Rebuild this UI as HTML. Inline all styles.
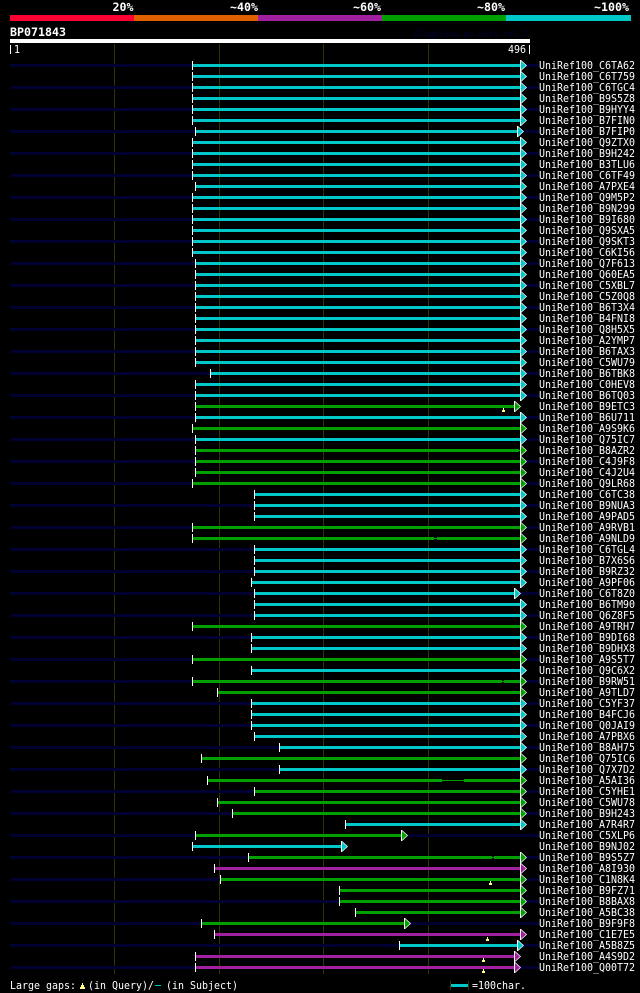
<!DOCTYPE html>
<html><head><meta charset="utf-8"><title>BP071843</title>
<style>
html,body{margin:0;padding:0;background:#000;width:640px;height:993px;overflow:hidden}
svg{display:block;position:absolute;left:0;top:0}
text{fill:#fff;font-family:"DejaVu Sans Mono","Liberation Mono",monospace;font-size:11px}
.b{font-weight:bold;font-size:11.5px}
.c{fill:#00c8c8}.g{fill:#00a000}.p{fill:#a020a0}
#bg{stroke:#000033;stroke-width:3;fill:none}
</style></head><body>
<svg width="640" height="993" viewBox="0 0 640 993" xmlns="http://www.w3.org/2000/svg">
<defs>
<g id="a"><path fill="#fff" d="M0-4H1L7 1.5 1 7H0Z"/><path d="M1-3L6 1.5 1 6Z"/></g>
<rect id="t" y="-3" width="1" height="9" fill="#fff"/>
<path id="y" fill="#ffff88" d="M1 0h1v2h1v2H0V2h1z"/>
</defs>
<rect width="640" height="993" fill="#000"/>
<text class="b" x="112.5" y="11" textLength="21" lengthAdjust="spacingAndGlyphs">20%</text>
<text class="b" x="230" y="11" textLength="28" lengthAdjust="spacingAndGlyphs">~40%</text>
<text class="b" x="353" y="11" textLength="28" lengthAdjust="spacingAndGlyphs">~60%</text>
<text class="b" x="477" y="11" textLength="28" lengthAdjust="spacingAndGlyphs">~80%</text>
<text class="b" x="594" y="11" textLength="35" lengthAdjust="spacingAndGlyphs">~100%</text>
<rect x="10" y="15" width="124" height="6" fill="#ff0033"/>
<rect x="134" y="15" width="124" height="6" fill="#e06000"/>
<rect x="258" y="15" width="124" height="6" fill="#a020a0"/>
<rect x="382" y="15" width="124" height="6" fill="#00a000"/>
<rect x="506" y="15" width="125" height="6" fill="#00c8c8"/>
<text class="b" x="10" y="36" textLength="56" lengthAdjust="spacingAndGlyphs">BP071843</text>
<text x="414" y="37" style="fill:#000033;font-size:9px" textLength="114" lengthAdjust="spacingAndGlyphs">AlignView.pm Beta rel.7</text>
<rect x="10" y="39" width="520" height="4" fill="#fff"/>
<rect x="10" y="45" width="1" height="9" fill="#fff"/>
<text x="14" y="53" textLength="6" lengthAdjust="spacingAndGlyphs">1</text>
<text x="508" y="53" textLength="18" lengthAdjust="spacingAndGlyphs">496</text>
<rect x="529" y="45" width="1" height="9" fill="#fff"/>
<path d="M114.5 44V974M219.5 44V974M323.5 44V974M428.5 44V974" stroke="#333300" fill="none"/>
<path id="bg" d="M10 65.5H539M10 87.5H539M10 109.5H539M10 131.5H539M10 153.5H539M10 175.5H539M10 197.5H539M10 219.5H539M10 241.5H539M10 263.5H539M10 285.5H539M10 307.5H539M10 329.5H539M10 351.5H539M10 373.5H539M10 395.5H539M10 417.5H539M10 439.5H539M10 461.5H539M10 483.5H539M10 505.5H539M10 527.5H539M10 549.5H539M10 571.5H539M10 593.5H539M10 615.5H539M10 637.5H539M10 659.5H539M10 681.5H539M10 703.5H539M10 725.5H539M10 747.5H539M10 769.5H539M10 791.5H539M10 813.5H539M10 835.5H539M10 857.5H539M10 879.5H539M10 901.5H539M10 923.5H539M10 945.5H539M10 967.5H539"/>

<g transform="translate(0 64)" class="c"><rect x="192" width="328" height="3"/><use href="#t" x="192"/><use href="#a" x="520"/><text x="539" y="5" textLength="96" lengthAdjust="spacingAndGlyphs">UniRef100_C6TA62</text></g>
<g transform="translate(0 75)" class="c"><rect x="192" width="328" height="3"/><use href="#t" x="192"/><use href="#a" x="520"/><text x="539" y="5" textLength="96" lengthAdjust="spacingAndGlyphs">UniRef100_C6T759</text></g>
<g transform="translate(0 86)" class="c"><rect x="192" width="328" height="3"/><use href="#t" x="192"/><use href="#a" x="520"/><text x="539" y="5" textLength="96" lengthAdjust="spacingAndGlyphs">UniRef100_C6TGC4</text></g>
<g transform="translate(0 97)" class="c"><rect x="192" width="328" height="3"/><use href="#t" x="192"/><use href="#a" x="520"/><text x="539" y="5" textLength="96" lengthAdjust="spacingAndGlyphs">UniRef100_B9S5Z8</text></g>
<g transform="translate(0 108)" class="c"><rect x="192" width="328" height="3"/><use href="#t" x="192"/><use href="#a" x="520"/><text x="539" y="5" textLength="96" lengthAdjust="spacingAndGlyphs">UniRef100_B9HYY4</text></g>
<g transform="translate(0 119)" class="c"><rect x="192" width="328" height="3"/><use href="#t" x="192"/><use href="#a" x="520"/><text x="539" y="5" textLength="96" lengthAdjust="spacingAndGlyphs">UniRef100_B7FIN0</text></g>
<g transform="translate(0 130)" class="c"><rect x="195" width="322" height="3"/><use href="#t" x="195"/><use href="#a" x="517"/><text x="539" y="5" textLength="96" lengthAdjust="spacingAndGlyphs">UniRef100_B7FIP0</text></g>
<g transform="translate(0 141)" class="c"><rect x="192" width="328" height="3"/><use href="#t" x="192"/><use href="#a" x="520"/><text x="539" y="5" textLength="96" lengthAdjust="spacingAndGlyphs">UniRef100_Q9ZTX0</text></g>
<g transform="translate(0 152)" class="c"><rect x="192" width="328" height="3"/><use href="#t" x="192"/><use href="#a" x="520"/><text x="539" y="5" textLength="96" lengthAdjust="spacingAndGlyphs">UniRef100_B9H242</text></g>
<g transform="translate(0 163)" class="c"><rect x="192" width="328" height="3"/><use href="#t" x="192"/><use href="#a" x="520"/><text x="539" y="5" textLength="96" lengthAdjust="spacingAndGlyphs">UniRef100_B3TLU6</text></g>
<g transform="translate(0 174)" class="c"><rect x="192" width="328" height="3"/><use href="#t" x="192"/><use href="#a" x="520"/><text x="539" y="5" textLength="96" lengthAdjust="spacingAndGlyphs">UniRef100_C6TF49</text></g>
<g transform="translate(0 185)" class="c"><rect x="195" width="325" height="3"/><use href="#t" x="195"/><use href="#a" x="520"/><text x="539" y="5" textLength="96" lengthAdjust="spacingAndGlyphs">UniRef100_A7PXE4</text></g>
<g transform="translate(0 196)" class="c"><rect x="192" width="328" height="3"/><use href="#t" x="192"/><use href="#a" x="520"/><text x="539" y="5" textLength="96" lengthAdjust="spacingAndGlyphs">UniRef100_Q9M5P2</text></g>
<g transform="translate(0 207)" class="c"><rect x="192" width="328" height="3"/><use href="#t" x="192"/><use href="#a" x="520"/><text x="539" y="5" textLength="96" lengthAdjust="spacingAndGlyphs">UniRef100_B9N299</text></g>
<g transform="translate(0 218)" class="c"><rect x="192" width="328" height="3"/><use href="#t" x="192"/><use href="#a" x="520"/><text x="539" y="5" textLength="96" lengthAdjust="spacingAndGlyphs">UniRef100_B9I680</text></g>
<g transform="translate(0 229)" class="c"><rect x="192" width="328" height="3"/><use href="#t" x="192"/><use href="#a" x="520"/><text x="539" y="5" textLength="96" lengthAdjust="spacingAndGlyphs">UniRef100_Q9SXA5</text></g>
<g transform="translate(0 240)" class="c"><rect x="192" width="328" height="3"/><use href="#t" x="192"/><use href="#a" x="520"/><text x="539" y="5" textLength="96" lengthAdjust="spacingAndGlyphs">UniRef100_Q9SKT3</text></g>
<g transform="translate(0 251)" class="c"><rect x="192" width="328" height="3"/><use href="#t" x="192"/><use href="#a" x="520"/><text x="539" y="5" textLength="96" lengthAdjust="spacingAndGlyphs">UniRef100_C6KI56</text></g>
<g transform="translate(0 262)" class="c"><rect x="195" width="325" height="3"/><use href="#t" x="195"/><use href="#a" x="520"/><text x="539" y="5" textLength="96" lengthAdjust="spacingAndGlyphs">UniRef100_Q7F613</text></g>
<g transform="translate(0 273)" class="c"><rect x="195" width="325" height="3"/><use href="#t" x="195"/><use href="#a" x="520"/><text x="539" y="5" textLength="96" lengthAdjust="spacingAndGlyphs">UniRef100_Q60EA5</text></g>
<g transform="translate(0 284)" class="c"><rect x="195" width="325" height="3"/><use href="#t" x="195"/><use href="#a" x="520"/><text x="539" y="5" textLength="96" lengthAdjust="spacingAndGlyphs">UniRef100_C5XBL7</text></g>
<g transform="translate(0 295)" class="c"><rect x="195" width="325" height="3"/><use href="#t" x="195"/><use href="#a" x="520"/><text x="539" y="5" textLength="96" lengthAdjust="spacingAndGlyphs">UniRef100_C5Z0Q8</text></g>
<g transform="translate(0 306)" class="c"><rect x="195" width="325" height="3"/><use href="#t" x="195"/><use href="#a" x="520"/><text x="539" y="5" textLength="96" lengthAdjust="spacingAndGlyphs">UniRef100_B6T3X4</text></g>
<g transform="translate(0 317)" class="c"><rect x="195" width="325" height="3"/><use href="#t" x="195"/><use href="#a" x="520"/><text x="539" y="5" textLength="96" lengthAdjust="spacingAndGlyphs">UniRef100_B4FNI8</text></g>
<g transform="translate(0 328)" class="c"><rect x="195" width="325" height="3"/><use href="#t" x="195"/><use href="#a" x="520"/><text x="539" y="5" textLength="96" lengthAdjust="spacingAndGlyphs">UniRef100_Q8H5X5</text></g>
<g transform="translate(0 339)" class="c"><rect x="195" width="325" height="3"/><use href="#t" x="195"/><use href="#a" x="520"/><text x="539" y="5" textLength="96" lengthAdjust="spacingAndGlyphs">UniRef100_A2YMP7</text></g>
<g transform="translate(0 350)" class="c"><rect x="195" width="325" height="3"/><use href="#t" x="195"/><use href="#a" x="520"/><text x="539" y="5" textLength="96" lengthAdjust="spacingAndGlyphs">UniRef100_B6TAX3</text></g>
<g transform="translate(0 361)" class="c"><rect x="195" width="325" height="3"/><use href="#t" x="195"/><use href="#a" x="520"/><text x="539" y="5" textLength="96" lengthAdjust="spacingAndGlyphs">UniRef100_C5WU79</text></g>
<g transform="translate(0 372)" class="c"><rect x="210" width="310" height="3"/><use href="#t" x="210"/><use href="#a" x="520"/><text x="539" y="5" textLength="96" lengthAdjust="spacingAndGlyphs">UniRef100_B6TBK8</text></g>
<g transform="translate(0 383)" class="c"><rect x="195" width="325" height="3"/><use href="#t" x="195"/><use href="#a" x="520"/><text x="539" y="5" textLength="96" lengthAdjust="spacingAndGlyphs">UniRef100_C0HEV8</text></g>
<g transform="translate(0 394)" class="c"><rect x="195" width="325" height="3"/><use href="#t" x="195"/><use href="#a" x="520"/><text x="539" y="5" textLength="96" lengthAdjust="spacingAndGlyphs">UniRef100_B6TQ03</text></g>
<g transform="translate(0 405)" class="g"><rect x="195" width="319" height="3"/><use href="#t" x="195"/><use href="#a" x="514"/><text x="539" y="5" textLength="96" lengthAdjust="spacingAndGlyphs">UniRef100_B9ETC3</text></g>
<g transform="translate(0 416)" class="c"><rect x="195" width="325" height="3"/><use href="#t" x="195"/><use href="#a" x="520"/><text x="539" y="5" textLength="96" lengthAdjust="spacingAndGlyphs">UniRef100_B6U711</text></g>
<g transform="translate(0 427)" class="g"><rect x="192" width="328" height="3"/><use href="#t" x="192"/><use href="#a" x="520"/><text x="539" y="5" textLength="96" lengthAdjust="spacingAndGlyphs">UniRef100_A9S9K6</text></g>
<g transform="translate(0 438)" class="c"><rect x="195" width="325" height="3"/><use href="#t" x="195"/><use href="#a" x="520"/><text x="539" y="5" textLength="96" lengthAdjust="spacingAndGlyphs">UniRef100_Q75IC7</text></g>
<g transform="translate(0 449)" class="g"><rect x="195" width="325" height="3"/><use href="#t" x="195"/><use href="#a" x="520"/><text x="539" y="5" textLength="96" lengthAdjust="spacingAndGlyphs">UniRef100_B8AZR2</text></g>
<g transform="translate(0 460)" class="g"><rect x="195" width="325" height="3"/><use href="#t" x="195"/><use href="#a" x="520"/><text x="539" y="5" textLength="96" lengthAdjust="spacingAndGlyphs">UniRef100_C4J9F8</text></g>
<g transform="translate(0 471)" class="g"><rect x="195" width="325" height="3"/><use href="#t" x="195"/><use href="#a" x="520"/><text x="539" y="5" textLength="96" lengthAdjust="spacingAndGlyphs">UniRef100_C4J2U4</text></g>
<g transform="translate(0 482)" class="g"><rect x="192" width="328" height="3"/><use href="#t" x="192"/><use href="#a" x="520"/><text x="539" y="5" textLength="96" lengthAdjust="spacingAndGlyphs">UniRef100_Q9LR68</text></g>
<g transform="translate(0 493)" class="c"><rect x="254" width="266" height="3"/><use href="#t" x="254"/><use href="#a" x="520"/><text x="539" y="5" textLength="96" lengthAdjust="spacingAndGlyphs">UniRef100_C6TC38</text></g>
<g transform="translate(0 504)" class="c"><rect x="254" width="266" height="3"/><use href="#t" x="254"/><use href="#a" x="520"/><text x="539" y="5" textLength="96" lengthAdjust="spacingAndGlyphs">UniRef100_B9NUA3</text></g>
<g transform="translate(0 515)" class="c"><rect x="254" width="266" height="3"/><use href="#t" x="254"/><use href="#a" x="520"/><text x="539" y="5" textLength="96" lengthAdjust="spacingAndGlyphs">UniRef100_A9PAD5</text></g>
<g transform="translate(0 526)" class="g"><rect x="192" width="328" height="3"/><use href="#t" x="192"/><use href="#a" x="520"/><text x="539" y="5" textLength="96" lengthAdjust="spacingAndGlyphs">UniRef100_A9RVB1</text></g>
<g transform="translate(0 537)" class="g"><rect x="192" width="328" height="3"/><use href="#t" x="192"/><use href="#a" x="520"/><text x="539" y="5" textLength="96" lengthAdjust="spacingAndGlyphs">UniRef100_A9NLD9</text></g>
<g transform="translate(0 548)" class="c"><rect x="254" width="266" height="3"/><use href="#t" x="254"/><use href="#a" x="520"/><text x="539" y="5" textLength="96" lengthAdjust="spacingAndGlyphs">UniRef100_C6TGL4</text></g>
<g transform="translate(0 559)" class="c"><rect x="254" width="266" height="3"/><use href="#t" x="254"/><use href="#a" x="520"/><text x="539" y="5" textLength="96" lengthAdjust="spacingAndGlyphs">UniRef100_B7X6S6</text></g>
<g transform="translate(0 570)" class="c"><rect x="254" width="266" height="3"/><use href="#t" x="254"/><use href="#a" x="520"/><text x="539" y="5" textLength="96" lengthAdjust="spacingAndGlyphs">UniRef100_B9RZ32</text></g>
<g transform="translate(0 581)" class="c"><rect x="251" width="269" height="3"/><use href="#t" x="251"/><use href="#a" x="520"/><text x="539" y="5" textLength="96" lengthAdjust="spacingAndGlyphs">UniRef100_A9PF06</text></g>
<g transform="translate(0 592)" class="c"><rect x="254" width="260" height="3"/><use href="#t" x="254"/><use href="#a" x="514"/><text x="539" y="5" textLength="96" lengthAdjust="spacingAndGlyphs">UniRef100_C6T8Z0</text></g>
<g transform="translate(0 603)" class="c"><rect x="254" width="266" height="3"/><use href="#t" x="254"/><use href="#a" x="520"/><text x="539" y="5" textLength="96" lengthAdjust="spacingAndGlyphs">UniRef100_B6TM90</text></g>
<g transform="translate(0 614)" class="c"><rect x="254" width="266" height="3"/><use href="#t" x="254"/><use href="#a" x="520"/><text x="539" y="5" textLength="96" lengthAdjust="spacingAndGlyphs">UniRef100_Q6Z8F5</text></g>
<g transform="translate(0 625)" class="g"><rect x="192" width="328" height="3"/><use href="#t" x="192"/><use href="#a" x="520"/><text x="539" y="5" textLength="96" lengthAdjust="spacingAndGlyphs">UniRef100_A9TRH7</text></g>
<g transform="translate(0 636)" class="c"><rect x="251" width="269" height="3"/><use href="#t" x="251"/><use href="#a" x="520"/><text x="539" y="5" textLength="96" lengthAdjust="spacingAndGlyphs">UniRef100_B9DI68</text></g>
<g transform="translate(0 647)" class="c"><rect x="251" width="269" height="3"/><use href="#t" x="251"/><use href="#a" x="520"/><text x="539" y="5" textLength="96" lengthAdjust="spacingAndGlyphs">UniRef100_B9DHX8</text></g>
<g transform="translate(0 658)" class="g"><rect x="192" width="328" height="3"/><use href="#t" x="192"/><use href="#a" x="520"/><text x="539" y="5" textLength="96" lengthAdjust="spacingAndGlyphs">UniRef100_A9S5T7</text></g>
<g transform="translate(0 669)" class="c"><rect x="251" width="269" height="3"/><use href="#t" x="251"/><use href="#a" x="520"/><text x="539" y="5" textLength="96" lengthAdjust="spacingAndGlyphs">UniRef100_Q9C6X2</text></g>
<g transform="translate(0 680)" class="g"><rect x="192" width="328" height="3"/><use href="#t" x="192"/><use href="#a" x="520"/><text x="539" y="5" textLength="96" lengthAdjust="spacingAndGlyphs">UniRef100_B9RW51</text></g>
<g transform="translate(0 691)" class="g"><rect x="217" width="303" height="3"/><use href="#t" x="217"/><use href="#a" x="520"/><text x="539" y="5" textLength="96" lengthAdjust="spacingAndGlyphs">UniRef100_A9TLD7</text></g>
<g transform="translate(0 702)" class="c"><rect x="251" width="269" height="3"/><use href="#t" x="251"/><use href="#a" x="520"/><text x="539" y="5" textLength="96" lengthAdjust="spacingAndGlyphs">UniRef100_C5YF37</text></g>
<g transform="translate(0 713)" class="c"><rect x="251" width="269" height="3"/><use href="#t" x="251"/><use href="#a" x="520"/><text x="539" y="5" textLength="96" lengthAdjust="spacingAndGlyphs">UniRef100_B4FCJ6</text></g>
<g transform="translate(0 724)" class="c"><rect x="251" width="269" height="3"/><use href="#t" x="251"/><use href="#a" x="520"/><text x="539" y="5" textLength="96" lengthAdjust="spacingAndGlyphs">UniRef100_Q0JAI9</text></g>
<g transform="translate(0 735)" class="c"><rect x="254" width="266" height="3"/><use href="#t" x="254"/><use href="#a" x="520"/><text x="539" y="5" textLength="96" lengthAdjust="spacingAndGlyphs">UniRef100_A7PBX6</text></g>
<g transform="translate(0 746)" class="c"><rect x="279" width="241" height="3"/><use href="#t" x="279"/><use href="#a" x="520"/><text x="539" y="5" textLength="96" lengthAdjust="spacingAndGlyphs">UniRef100_B8AH75</text></g>
<g transform="translate(0 757)" class="g"><rect x="201" width="319" height="3"/><use href="#t" x="201"/><use href="#a" x="520"/><text x="539" y="5" textLength="96" lengthAdjust="spacingAndGlyphs">UniRef100_Q75IC6</text></g>
<g transform="translate(0 768)" class="c"><rect x="279" width="241" height="3"/><use href="#t" x="279"/><use href="#a" x="520"/><text x="539" y="5" textLength="96" lengthAdjust="spacingAndGlyphs">UniRef100_Q7X7D2</text></g>
<g transform="translate(0 779)" class="g"><rect x="207" width="313" height="3"/><use href="#t" x="207"/><use href="#a" x="520"/><text x="539" y="5" textLength="96" lengthAdjust="spacingAndGlyphs">UniRef100_A5AI36</text></g>
<g transform="translate(0 790)" class="g"><rect x="254" width="266" height="3"/><use href="#t" x="254"/><use href="#a" x="520"/><text x="539" y="5" textLength="96" lengthAdjust="spacingAndGlyphs">UniRef100_C5YHE1</text></g>
<g transform="translate(0 801)" class="g"><rect x="217" width="303" height="3"/><use href="#t" x="217"/><use href="#a" x="520"/><text x="539" y="5" textLength="96" lengthAdjust="spacingAndGlyphs">UniRef100_C5WU78</text></g>
<g transform="translate(0 812)" class="g"><rect x="232" width="288" height="3"/><use href="#t" x="232"/><use href="#a" x="520"/><text x="539" y="5" textLength="96" lengthAdjust="spacingAndGlyphs">UniRef100_B9H243</text></g>
<g transform="translate(0 823)" class="c"><rect x="345" width="175" height="3"/><use href="#t" x="345"/><use href="#a" x="520"/><text x="539" y="5" textLength="96" lengthAdjust="spacingAndGlyphs">UniRef100_A7R4R7</text></g>
<g transform="translate(0 834)" class="g"><rect x="195" width="206" height="3"/><use href="#t" x="195"/><use href="#a" x="401"/><text x="539" y="5" textLength="96" lengthAdjust="spacingAndGlyphs">UniRef100_C5XLP6</text></g>
<g transform="translate(0 845)" class="c"><rect x="192" width="149" height="3"/><use href="#t" x="192"/><use href="#a" x="341"/><text x="539" y="5" textLength="96" lengthAdjust="spacingAndGlyphs">UniRef100_B9NJ02</text></g>
<g transform="translate(0 856)" class="g"><rect x="248" width="272" height="3"/><use href="#t" x="248"/><use href="#a" x="520"/><text x="539" y="5" textLength="96" lengthAdjust="spacingAndGlyphs">UniRef100_B9S5Z7</text></g>
<g transform="translate(0 867)" class="p"><rect x="214" width="306" height="3"/><use href="#t" x="214"/><use href="#a" x="520"/><text x="539" y="5" textLength="96" lengthAdjust="spacingAndGlyphs">UniRef100_A8I930</text></g>
<g transform="translate(0 878)" class="g"><rect x="220" width="300" height="3"/><use href="#t" x="220"/><use href="#a" x="520"/><text x="539" y="5" textLength="96" lengthAdjust="spacingAndGlyphs">UniRef100_C1N8K4</text></g>
<g transform="translate(0 889)" class="g"><rect x="339" width="181" height="3"/><use href="#t" x="339"/><use href="#a" x="520"/><text x="539" y="5" textLength="96" lengthAdjust="spacingAndGlyphs">UniRef100_B9FZ71</text></g>
<g transform="translate(0 900)" class="g"><rect x="339" width="181" height="3"/><use href="#t" x="339"/><use href="#a" x="520"/><text x="539" y="5" textLength="96" lengthAdjust="spacingAndGlyphs">UniRef100_B8BAX8</text></g>
<g transform="translate(0 911)" class="g"><rect x="355" width="165" height="3"/><use href="#t" x="355"/><use href="#a" x="520"/><text x="539" y="5" textLength="96" lengthAdjust="spacingAndGlyphs">UniRef100_A5BC38</text></g>
<g transform="translate(0 922)" class="g"><rect x="201" width="203" height="3"/><use href="#t" x="201"/><use href="#a" x="404"/><text x="539" y="5" textLength="96" lengthAdjust="spacingAndGlyphs">UniRef100_B9F9F8</text></g>
<g transform="translate(0 933)" class="p"><rect x="214" width="306" height="3"/><use href="#t" x="214"/><use href="#a" x="520"/><text x="539" y="5" textLength="96" lengthAdjust="spacingAndGlyphs">UniRef100_C1E7E5</text></g>
<g transform="translate(0 944)" class="c"><rect x="399" width="118" height="3"/><use href="#t" x="399"/><use href="#a" x="517"/><text x="539" y="5" textLength="96" lengthAdjust="spacingAndGlyphs">UniRef100_A5B8Z5</text></g>
<g transform="translate(0 955)" class="p"><rect x="195" width="319" height="3"/><use href="#t" x="195"/><use href="#a" x="514"/><text x="539" y="5" textLength="96" lengthAdjust="spacingAndGlyphs">UniRef100_A4S9D2</text></g>
<g transform="translate(0 966)" class="p"><rect x="195" width="319" height="3"/><use href="#t" x="195"/><use href="#a" x="514"/><text x="539" y="5" textLength="96" lengthAdjust="spacingAndGlyphs">UniRef100_Q00T72</text></g>

<path fill="#000" d="M519 449h1v1h-1zM519 451h1v1h-1zM434 537h3v1h-3zM434 539h3v1h-3zM502 680h2v1h-2zM502 682h2v1h-2zM442 779h22v1h-22zM442 781h22v1h-22zM492 856h2v1h-2zM492 858h2v1h-2z"/>
<use href="#y" x="502" y="408"/>
<use href="#y" x="489" y="881"/>
<use href="#y" x="486" y="937"/>
<use href="#y" x="482" y="958"/>
<use href="#y" x="482" y="969"/>

<text x="10" y="989" textLength="66" lengthAdjust="spacingAndGlyphs">Large gaps:</text>
<path fill="#ffff88" d="M82 983h1v2h1v2h1v2h-5v-2h1v-2h1z"/>
<text x="88" y="989" textLength="66" lengthAdjust="spacingAndGlyphs">(in Query)/</text>
<rect x="155" y="985" width="6" height="1" fill="#00c8c8"/>
<text x="166" y="989" textLength="72" lengthAdjust="spacingAndGlyphs">(in Subject)</text>
<path d="M450.5 981V990M468.5 981V990" stroke="#333300" fill="none"/>
<rect x="451" y="984" width="17" height="3" fill="#00c8c8"/>
<text x="472" y="989" textLength="54" lengthAdjust="spacingAndGlyphs">=100char.</text>
</svg>
</body></html>
